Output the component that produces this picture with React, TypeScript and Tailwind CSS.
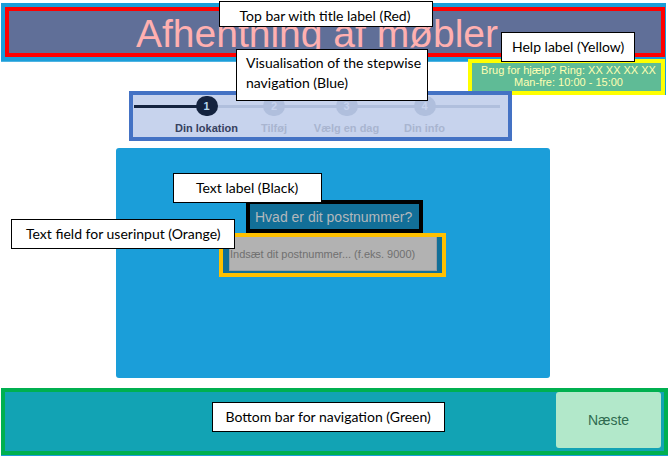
import type { ReactNode } from "react";

const steps = ["Din lokation", "Tilføj", "Vælg en dag", "Din info"];

function Callout({ className, children }: { className: string; children: ReactNode }) {
  return (
    <p
      className={`absolute z-20 border border-black bg-white font-[Lato,sans-serif] text-sm text-black ${className}`}
    >
      {children}
    </p>
  );
}

function Header() {
  return (
    <header className="relative border-b border-[#4fb3e2] bg-[#1b9ed9] pt-1 pr-px pb-1 pl-1">
      <div className="flex h-[50px] items-center justify-center border-4 border-[#ff0000] bg-[#606f98] pt-1 pr-9">
        <h1 className="text-[39px] leading-[38px] whitespace-nowrap text-[#ffb0b0]">Afhentning af møbler</h1>
      </div>
      <Callout className="-top-[2px] left-[calc(50%-115px)] h-[26px] w-[214px] overflow-hidden pl-5 leading-7 whitespace-nowrap">
        Top bar with title label (Red)
      </Callout>
    </header>
  );
}

function Help() {
  return (
    <div className="relative -mt-[3px] flex justify-end">
      <div className="bg-[#1b9ed9] pr-px">
        <div className="h-9 w-[197px] border-4 border-[#ffff00] bg-[#5fbb96] pt-px pl-1 text-center text-[11px] leading-3 whitespace-nowrap text-[#ffffb2]">
          <p>Brug for hjælp? Ring: XX XX XX XX</p>
          <p>Man-fre: 10:00 - 15:00</p>
        </div>
      </div>
      <Callout className="-top-[27px] right-[31px] h-[30px] w-[134px] pl-[10px] leading-7 whitespace-nowrap">
        Help label (Yellow)
      </Callout>
    </div>
  );
}

function Stepper() {
  return (
    <nav aria-label="Trin" className="relative -mt-1 flex justify-center pr-[26px]">
      <div className="relative h-[50px] w-[383px] border-4 border-[#4472c4] bg-[#c7d3ed]">
        <div className="absolute top-[10px] left-px h-[3px] w-[366px] bg-[#b0bfdd]">
          <div className="h-full w-[66px] bg-[#14233f]" />
        </div>
        <ol className="relative ml-[39px] grid grid-cols-[69px_66px_79px_77px] pt-px text-[11px] font-bold">
          {steps.map((label, i) => (
            <li
              key={label}
              aria-current={i === 0 ? "step" : undefined}
              className={`flex flex-col items-center gap-1 whitespace-nowrap ${i === 0 ? "text-[#36415f]" : "text-[#a9b5d0]"}`}
            >
              <span
                className={`flex h-5 w-[22px] items-center justify-center rounded-full leading-5 ${i === 0 ? "bg-[#14233f] text-[#b9d8ec]" : "bg-[#b0bfdd] text-[#c7d3ed]"}`}
              >
                {i + 1}
              </span>
              <span className="leading-4">{label}</span>
            </li>
          ))}
        </ol>
        <Callout className="-top-[46px] left-[103px] h-[52px] w-[192px] pt-[3px] pl-[9px] leading-5">
          Visualisation of the stepwise navigation (Blue)
        </Callout>
      </div>
    </nav>
  );
}

function LocationForm() {
  return (
    <main className="mt-[7px] flex justify-center pr-px">
      <form className="relative flex h-[230px] w-[434px] flex-col items-center rounded-[3px] bg-[#1b9ed9] pt-[52px]">
        <label
          htmlFor="postnummer"
          className="ml-[3px] h-[33px] w-[177px] border-4 border-black bg-[#126f98] pl-[5px] text-sm leading-[26px] whitespace-nowrap text-[#b2b8bc]"
        >
          Hvad er dit postnummer?
        </label>
        <div className="mr-px h-11 w-[227px] border-4 border-[#ffc000] bg-[#126f98] pr-[5px] pl-[6px]">
          <input
            id="postnummer"
            type="text"
            placeholder="Indsæt dit postnummer... (f.eks. 9000)"
            className="block h-[34px] w-full border border-t-0 border-[#9a9fa2] bg-[#b2b2b2] text-[11px] text-[#4a4a4a] outline-none placeholder:text-[#707070]"
          />
        </div>
        <Callout className="top-[25px] left-[57px] h-[30px] w-[149px] pl-[22px] leading-7 whitespace-nowrap">
          Text label (Black)
        </Callout>
        <Callout className="top-[71px] -left-[105px] h-[30px] w-[224px] pl-[14px] leading-7 whitespace-nowrap">
          Text field for userinput (Orange)
        </Callout>
      </form>
    </main>
  );
}

function Footer() {
  return (
    <footer className="relative -mr-[2px] mt-[10px] border-b border-[#1b9ed9]">
      <div className="flex h-[67px] justify-end border-4 border-[#00b050] bg-[#12a3b4] pr-[3px]">
        <button
          type="button"
          className="h-[56px] w-[105px] rounded-[3px] bg-[#b2e8ca] text-sm text-[#2f6b50]"
        >
          Næste
        </button>
      </div>
      <Callout className="top-[14px] left-[calc(50%-123px)] h-[30px] w-[233px] pl-[13px] leading-7 whitespace-nowrap">
        Bottom bar for navigation (Green)
      </Callout>
    </footer>
  );
}

export default function App() {
  return (
    <div className="bg-white pt-[3px] pr-[3px] pl-px font-['Liberation_Sans',Arial,sans-serif]">
      <Header />
      <Help />
      <Stepper />
      <LocationForm />
      <Footer />
    </div>
  );
}
